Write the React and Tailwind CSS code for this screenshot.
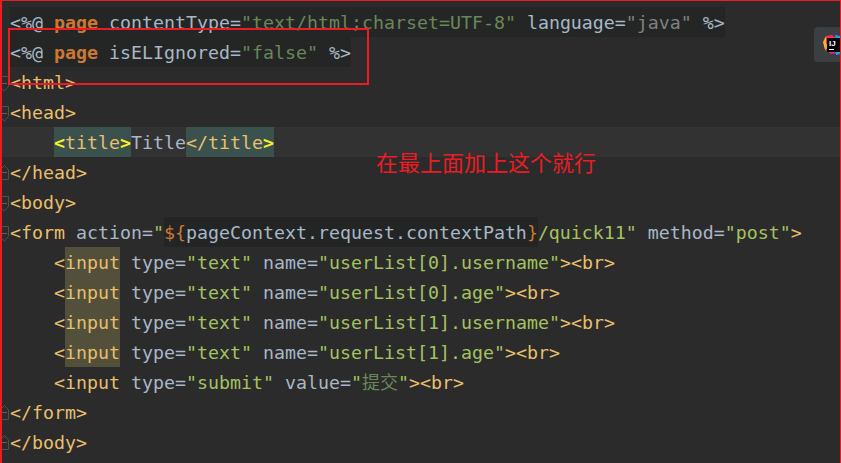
const TAG = "text-[#e8bf6a]";
const ATTR = "text-[#a9b7c6]";
const STR = "text-[#a5c261]";
const DIM = "text-[#6a8759]";
const KEY = "text-[#cc7832] font-bold";

const Fold = ({ end }) => (
  <svg width="7" height="16" viewBox="0 0 7 16" className={`ml-[2px] ${end ? "mt-[8px]" : "mt-[9px]"}`}>
    {end ? (
      <path d="M-1 14.5H6.5V5L2.5.5-1 4Z" fill="#2b2b2b" stroke="#505050" />
    ) : (
      <path d="M-1 .5H6.5V10.5L2.5 15-1 12Z" fill="#2b2b2b" stroke="#505050" />
    )}
    <path d="M0 7.5H5" stroke="#606060" />
  </svg>
);

const Line = ({ fold, active, children }) => (
  <div className={`flex h-[30px] leading-[32px] ${active ? "bg-[#323232]" : ""}`}>
    <div className="w-2.5 shrink-0">{fold && <Fold end={fold === "end"} />}</div>
    {children}
  </div>
);

const InputLine = ({ name }) => (
  <Line>
    <span className="pl-[44px]">
      <span className={TAG}>{"<"}</span>
      <span className="inline-block h-[30px] w-[55px] bg-[#52503a] align-top">
        <span className={TAG}>input</span>
      </span>
      <span className={ATTR}> type=</span>
      <span className={STR}>"text"</span>
      <span className={ATTR}> name=</span>
      <span className={STR}>"{name}"</span>
      <span className={TAG}>{"><br>"}</span>
    </span>
  </Line>
);

export default function App() {
  return (
    <div className="relative h-[463px] w-[841px] overflow-hidden whitespace-pre border-l-2 border-r border-t border-[#ed1c24] bg-[#2b2b2b] pt-[6px] font-['DejaVu_Sans_Mono','Noto_Sans_CJK_SC',monospace] text-[18.27px]">
      <div className="-ml-0.5">
        <Line>
          <span className="bg-[#242625]">
            <span className={ATTR}>{"<%@ "}</span>
            <span className={KEY}>page</span>
            <span className={ATTR}> contentType=</span>
            <span className={DIM}>"text/html;charset=UTF-8"</span>
            <span className={ATTR}> language=</span>
            <span className="text-[#808080]">"java"</span>
            <span className={ATTR}> %&gt;</span>
          </span>
        </Line>
        <Line>
          <span className="bg-[#242625]">
            <span className={ATTR}>{"<%@ "}</span>
            <span className={KEY}>page</span>
            <span className={ATTR}> isELIgnored=</span>
            <span className={DIM}>"false"</span>
            <span className={ATTR}> %&gt;</span>
          </span>
        </Line>
        <Line fold="start">
          <span className={TAG}>{"<html>"}</span>
        </Line>
        <Line fold="start">
          <span className={TAG}>{"<head>"}</span>
        </Line>
        <Line active>
          <span className="pl-[44px]">
            <span className="inline-block h-[30px] bg-[#3b514d] align-top">
              <span className="font-bold text-[#ffef28]">{"<"}</span>
              <span className={TAG}>title</span>
              <span className="font-bold text-[#ffef28]">{">"}</span>
            </span>
            <span className={ATTR}>Title</span>
            <span className="inline-block h-[30px] bg-[#3b514d] align-top">
              <span className={TAG}>{"</title"}</span>
              <span className="font-bold text-[#ffef28]">{">"}</span>
            </span>
          </span>
        </Line>
        <Line fold="end">
          <span className={TAG}>{"</head>"}</span>
        </Line>
        <Line fold="start">
          <span className={TAG}>{"<body>"}</span>
        </Line>
        <Line fold="start">
          <span className={TAG}>{"<form"}</span>
          <span className={ATTR}> action=</span>
          <span className={STR}>"</span>
          <span className="bg-[#232525]">
            <span className="text-[#cc7832]">{"${"}</span>
            <span className={ATTR}>pageContext.request.contextPath</span>
            <span className="text-[#cc7832]">{"}"}</span>
          </span>
          <span className={STR}>/quick11"</span>
          <span className={ATTR}> method=</span>
          <span className={STR}>"post"</span>
          <span className={TAG}>{">"}</span>
        </Line>
        <InputLine name="userList[0].username" />
        <InputLine name="userList[0].age" />
        <InputLine name="userList[1].username" />
        <InputLine name="userList[1].age" />
        <Line>
          <span className="pl-[44px]">
            <span className={TAG}>{"<input"}</span>
            <span className={ATTR}> type=</span>
            <span className={STR}>"submit"</span>
            <span className={ATTR}> value=</span>
            <span className={STR}>"</span>
            <span className="font-['Noto_Sans_CJK_SC',sans-serif] text-[18px] leading-none text-[#6a8759]">提交</span>
            <span className={STR}>"</span>
            <span className={TAG}>{"><br>"}</span>
          </span>
        </Line>
        <Line fold="end">
          <span className={TAG}>{"</form>"}</span>
        </Line>
        <Line fold="end">
          <span className={TAG}>{"</body>"}</span>
        </Line>
      </div>

      {/* annotation box and note drawn over the editor */}
      <div className="absolute left-[6px] top-[27px] h-[57px] w-[361px] border-2 border-[#ed1c24]" />
      <div className="absolute left-[374px] top-[145px] font-['Noto_Sans_CJK_SC',sans-serif] text-[22px] leading-[30px] text-[#ed1c24]">
        在最上面加上这个就行
      </div>

      {/* IDE toolbox badge */}
      <div className="absolute right-0 top-[26px] flex h-[35px] w-[26px] items-center rounded-l bg-[#3c3f41] pl-[9px]">
        <svg width="17" height="20" viewBox="0 0 17 20" className="shrink-0">
          <path d="M0 7 3 1h5l2 6-4 9-4-1-1-4Z" fill="#f9b233" />
          <path d="M3 1 9 0l4 3-6 9-4-3Z" fill="#fe2857" />
          <path d="M12 0l5 1v8l-4-2Z" fill="#0aa5f5" />
          <path d="M2 14l6 5 5-1-4-6Z" fill="#e5258c" />
          <path d="M12 16h5v3l-4 1Z" fill="#0aa5f5" />
          <rect x="4" y="3" width="13" height="14" fill="#000" />
          <rect x="6" y="14" width="5" height="1" fill="#fff" />
          <text x="6" y="11" fontFamily="Liberation Sans" fontSize="8" fontWeight="700" fill="#fff">
            IJ
          </text>
        </svg>
      </div>
    </div>
  );
}
